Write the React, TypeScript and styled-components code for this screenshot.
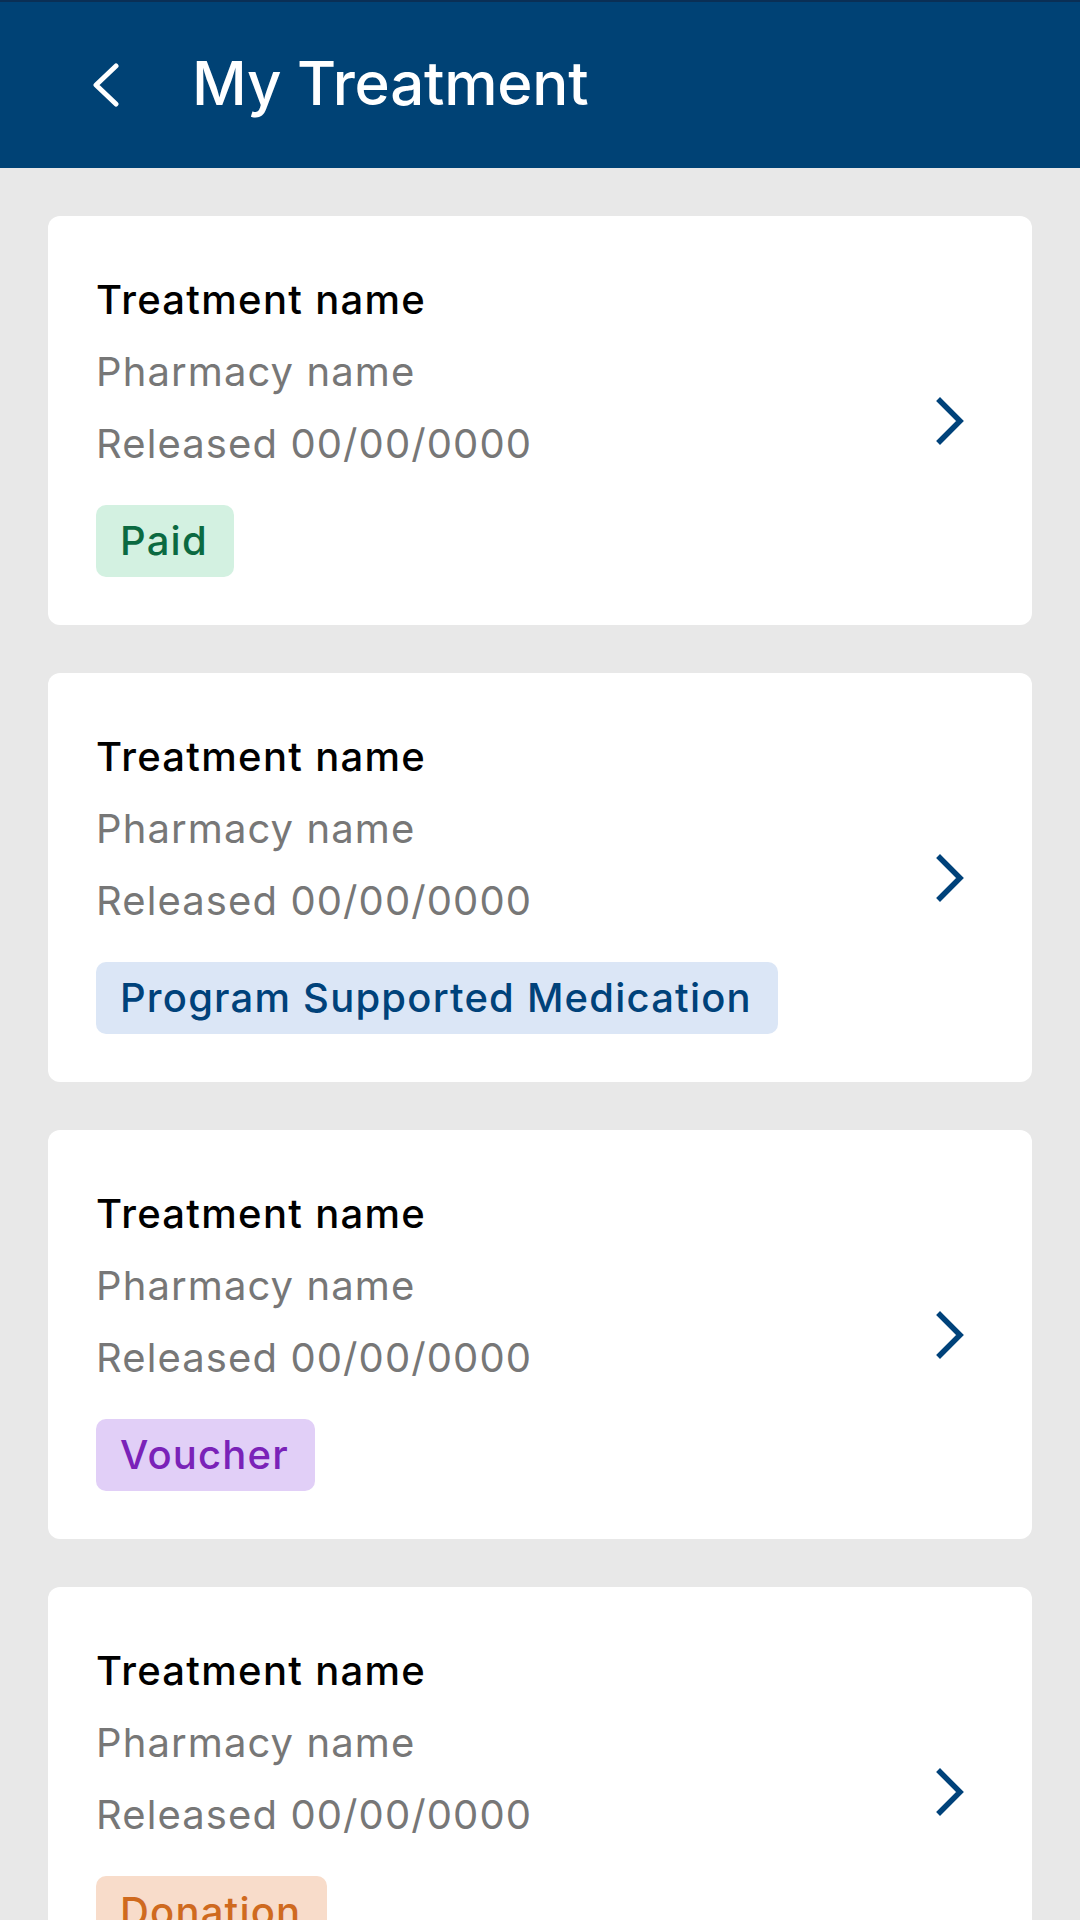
import styled, { createGlobalStyle } from "styled-components";

type Tone = "paid" | "program" | "voucher" | "donation";

const TONES: Record<Tone, { bg: string; fg: string }> = {
  paid: { bg: "#d3f1e1", fg: "#0b6a41" },
  program: { bg: "#dbe6f6", fg: "#00427a" },
  voucher: { bg: "#e1cff7", fg: "#7a22b8" },
  donation: { bg: "#f8dcca", fg: "#cf6a1f" },
};

const treatments: { id: number; status: string; tone: Tone }[] = [
  { id: 1, status: "Paid", tone: "paid" },
  { id: 2, status: "Program Supported Medication", tone: "program" },
  { id: 3, status: "Voucher", tone: "voucher" },
  { id: 4, status: "Donation", tone: "donation" },
];

const BackIcon = () => (
  <svg width="28" height="44" viewBox="0 0 28 44" fill="none">
    <polyline
      points="24,3 4,22 24,41"
      stroke="#fff"
      strokeWidth="5"
      strokeLinecap="round"
      strokeLinejoin="round"
    />
  </svg>
);

const ChevronIcon = () => (
  <svg width="28" height="48" viewBox="0 0 28 48" fill="none">
    <polyline
      points="4,4 24,24 4,44"
      stroke="#00427a"
      strokeWidth="5.5"
      strokeLinecap="square"
      strokeLinejoin="miter"
    />
  </svg>
);

const App = () => {
  return (
    <>
      <GlobalStyle />
      <Style.Page>
        <Style.Header>
          <Style.BackButton aria-label="Back">
            <BackIcon />
          </Style.BackButton>
          <Style.Title>My Treatment</Style.Title>
        </Style.Header>
        <Style.List>
          {treatments.map((item) => (
            <Style.Card key={item.id}>
              <Style.Info>
                <Style.Name>Treatment name</Style.Name>
                <Style.Meta>Pharmacy name</Style.Meta>
                <Style.Meta>Released 00/00/0000</Style.Meta>
                <Style.Badge tone={item.tone}>{item.status}</Style.Badge>
              </Style.Info>
              <Style.Arrow>
                <ChevronIcon />
              </Style.Arrow>
            </Style.Card>
          ))}
        </Style.List>
      </Style.Page>
    </>
  );
};

export default App;

const GlobalStyle = createGlobalStyle`
  html, body {
    margin: 0;
    padding: 0;
    background: #e8e8e8;
    font-family: Inter, "Noto Sans", sans-serif;
  }
  * {
    box-sizing: border-box;
  }
`;

const Style = {
  Page: styled.div`
    width: 1080px;
    height: 1920px;
    background: #e8e8e8;
    overflow: hidden;
  `,
  Header: styled.header`
    height: 168px;
    display: flex;
    align-items: center;
    gap: 72px;
    padding: 0 0 0 92px;
    background: #004275;
    border-top: 2px solid #0a2f55;
  `,
  BackButton: styled.button`
    display: flex;
    align-items: center;
    padding: 0;
    border: none;
    background: none;
    cursor: pointer;
  `,
  Title: styled.h1`
    margin: 0 0 4px;
    color: #fff;
    font-size: 60px;
    font-weight: 500;
    letter-spacing: -0.2px;
  `,
  List: styled.main`
    display: flex;
    flex-direction: column;
    gap: 48px;
    padding: 48px;
  `,
  Card: styled.article`
    display: flex;
    align-items: center;
    justify-content: space-between;
    padding: 48px 68px 48px 48px;
    background: #fff;
    border-radius: 12px;
  `,
  Info: styled.div`
    display: flex;
    flex-direction: column;
    align-items: flex-start;
  `,
  Name: styled.p`
    margin: 0;
    color: #000;
    font-size: 40px;
    font-weight: 500;
    line-height: 72px;
    letter-spacing: 1.3px;
  `,
  Meta: styled.p`
    margin: 0;
    color: #777;
    font-size: 40px;
    font-weight: 400;
    line-height: 72px;
    letter-spacing: 1.1px;
  `,
  Badge: styled.span<{ tone: Tone }>`
    margin-top: 25px;
    padding: 12px 26px 12px 24px;
    border-radius: 10px;
    background: ${(props) => TONES[props.tone].bg};
    color: ${(props) => TONES[props.tone].fg};
    font-size: 40px;
    font-weight: 500;
    line-height: 48px;
    letter-spacing: 1.2px;
  `,
  Arrow: styled.div`
    display: flex;
    align-items: center;
  `,
};
